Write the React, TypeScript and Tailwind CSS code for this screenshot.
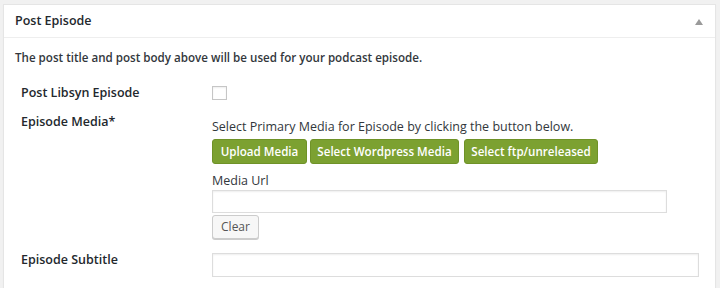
export default function App() {
  return (
    <div
      className="w-[720px] h-[288px] overflow-hidden bg-[#f1f1f1] pt-[4px] pl-[3px] text-[#32373c]"
      style={{ fontFamily: '"Open Sans", "Liberation Sans", sans-serif' }}
    >
      <div className="w-[713px] h-[290px] bg-white border border-[#e5e5e5] shadow-[0_1px_1px_rgba(0,0,0,0.04)]">
        {/* Header */}
        <div className="h-[33px] flex items-center justify-between border-b border-[#eeeeee] pl-[11px] pr-[12px]">
          <h2 className="text-[12.5px] font-semibold text-[#23282d] leading-none">Post Episode</h2>
          <svg width="8" height="6" viewBox="0 0 8 6" className="mt-[2px]">
            <path d="M4 0 L8 6 L0 6 Z" fill="#9a9a9a" />
          </svg>
        </div>

        <div className="pl-[11px]">
          <p className="mt-[11px] text-[11.6px] font-semibold text-[#32373c] leading-[18px]">
            The post title and post body above will be used for your podcast episode.
          </p>

          <div className="pl-[6px] mt-[16px]">
            {/* Post Libsyn Episode */}
            <div className="flex items-center h-[20px]">
              <div className="w-[191px] text-[12.5px] font-semibold text-[#23282d] leading-[20px]">Post Libsyn Episode</div>
              <div className="w-[15px] h-[14px] border border-[#c6c6c6] bg-white shadow-[inset_0_1px_2px_rgba(0,0,0,0.07)]" />
            </div>

            {/* Episode Media */}
            <div className="flex mt-[9px]">
              <div className="w-[191px] text-[12.5px] font-semibold text-[#23282d] leading-[20px]">Episode Media*</div>
              <div className="flex flex-col">
                <div className="text-[12.5px] text-[#32373c] leading-[18px] mt-[6px]">
                  Select Primary Media for Episode by clicking the button below.
                </div>
                <div className="flex mt-[3px]">
                  <button className="w-[95px] h-[25px] rounded-[3px] bg-[#7ca131] border border-[#6f9228] text-white text-[11.6px] font-semibold leading-none">
                    Upload Media
                  </button>
                  <button className="ml-[3px] w-[149px] h-[25px] rounded-[3px] bg-[#7ca131] border border-[#6f9228] text-white text-[11.6px] font-semibold leading-none">
                    Select Wordpress Media
                  </button>
                  <button className="ml-[5px] w-[134px] h-[25px] rounded-[3px] bg-[#7ca131] border border-[#6f9228] text-white text-[11.6px] font-semibold leading-none">
                    Select ftp/unreleased
                  </button>
                </div>
                <div className="text-[12.5px] text-[#32373c] leading-[18px] mt-[8px]">Media Url</div>
                <div className="w-[455px] h-[23px] border border-[#dddddd] bg-white shadow-[inset_0_1px_2px_rgba(0,0,0,0.07)]" />
                <button className="mt-[2px] w-[47px] h-[24px] rounded-[3px] bg-[#f7f7f7] border border-[#cccccc] text-[12px] text-[#555555] leading-none shadow-[0_1px_0_#cccccc]">
                  Clear
                </button>
              </div>
            </div>

            {/* Episode Subtitle */}
            <div className="flex items-start mt-[11px]">
              <div className="w-[191px] text-[12.5px] font-semibold text-[#23282d] leading-[20px]">Episode Subtitle</div>
              <div className="mt-[3px] w-[487px] h-[24px] border border-[#dddddd] bg-white shadow-[inset_0_1px_2px_rgba(0,0,0,0.07)]" />
            </div>
          </div>
        </div>
      </div>
    </div>
  );
}
